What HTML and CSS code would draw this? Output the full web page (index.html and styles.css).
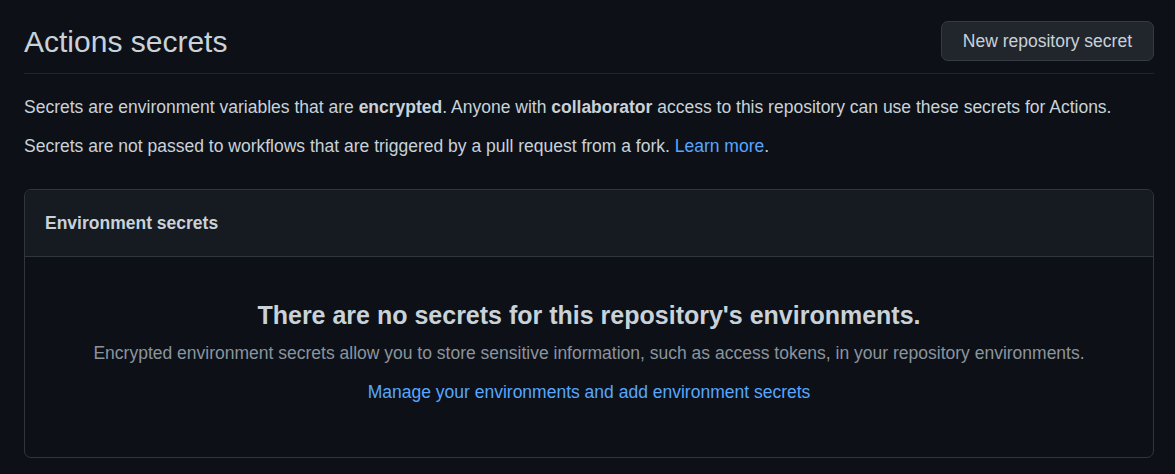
FILE: index.html
```html
<!DOCTYPE html>
<html lang="en">
<head>
<meta charset="utf-8">
<title>Actions secrets</title>
<link rel="stylesheet" href="styles.css">
</head>
<body>
<main class="page">
  <div class="subhead">
    <h2 class="subhead-heading">Actions secrets</h2>
    <button class="btn" type="button">New repository secret</button>
  </div>
  <p class="text">Secrets are environment variables that are <strong>encrypted</strong>. Anyone with <strong>collaborator</strong> access to this repository can use these secrets for Actions.</p>
  <p class="text">Secrets are not passed to workflows that are triggered by a pull request from a fork. <a class="link" href="#">Learn more</a>.</p>
  <section class="box">
    <div class="box-header">
      <h3 class="box-title">Environment secrets</h3>
    </div>
    <div class="blankslate">
      <h3 class="blankslate-heading">There are no secrets for this repository's environments.</h3>
      <p class="blankslate-desc">Encrypted environment secrets allow you to store sensitive information, such as access tokens, in your repository environments.</p>
      <p class="blankslate-action"><a class="link" href="#">Manage your environments and add environment secrets</a></p>
    </div>
  </section>
</main>
</body>
</html>
```
FILE: styles.css
```css
html, body {
  margin: 0;
  padding: 0;
  background: #0d1117;
}
body {
  font-family: "Liberation Sans", Arial, sans-serif;
  font-size: 17.5px;
  line-height: 1.5;
  color: #c9d1d9;
}
.page {
  margin: 0 21px 0 24px;
  padding-top: 18.5px;
}
.subhead {
  display: flex;
  align-items: center;
  justify-content: space-between;
  padding-bottom: 9.5px;
  border-bottom: 1px solid #21262d;
  margin-bottom: 20px;
}
.subhead-heading {
  margin: 0;
  font-size: 30px;
  font-weight: 400;
  line-height: 45px;
  color: #c9d1d9;
}
.btn {
  box-sizing: border-box;
  height: 40px;
  padding: 0 21px;
  font-family: inherit;
  font-size: 17.5px;
  line-height: 26px;
  color: #c9d1d9;
  background: #21262d;
  border: 1px solid #363b42;
  border-radius: 7px;
  white-space: nowrap;
}
.text {
  margin: 0 0 12.5px;
}
.text strong {
  font-weight: 700;
}
.link {
  color: #58a6ff;
  text-decoration: none;
}
.box {
  margin-top: 30px;
  border: 1px solid #30363d;
  border-radius: 7px;
  overflow: hidden;
}
.box-header {
  background: #161b22;
  padding: 20px;
  border-bottom: 1px solid #30363d;
}
.box-title {
  margin: 0;
  font-size: 17.5px;
  font-weight: 700;
  line-height: 26.25px;
}
.blankslate {
  padding: 40px;
  text-align: center;
}
.blankslate-heading {
  margin: 0 0 5px;
  font-size: 25px;
  font-weight: 700;
  line-height: 37.5px;
  color: #c9d1d9;
}
.blankslate-desc {
  margin: 0 0 12.5px;
  color: #8b949e;
}
.blankslate-action {
  margin: 0 0 12.5px;
}
```
